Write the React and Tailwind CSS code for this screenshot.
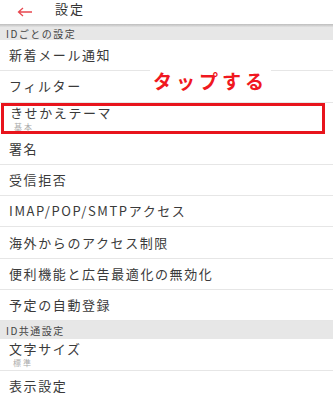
import React from "react";

const font = { fontFamily: '"Noto Sans CJK JP", "Noto Sans", sans-serif' };

function Row({ title, sub, className = "" }) {
  return (
    <div className={`h-[31.3px] border-b border-[#e6e6e6] bg-white pl-[9px] flex flex-col justify-center ${className}`}>
      <div className="text-[13px] leading-[14px] tracking-[1.6px] text-[#3a3a3a]">{title}</div>
      {sub && <div className="mt-[3px] pl-[4px] text-[8px] leading-[8px] tracking-[2px] text-[#aaa]">{sub}</div>}
    </div>
  );
}

function Section({ label, className = "" }) {
  return (
    <div className={`bg-[#e7e7e7] pl-[6px] flex items-center text-[10px] tracking-[1.5px] text-[#444] ${className}`}>
      {label}
    </div>
  );
}

export default function App() {
  return (
    <div className="w-[333px] h-[400px] overflow-hidden bg-white relative" style={font}>
      <div className="h-[24px] bg-white flex items-start">
        <svg className="ml-[17px] mt-[7px]" width="16" height="10" viewBox="0 0 16 10" fill="none">
          <path d="M15 5H2M6 1L1.5 5L6 9" stroke="#e8474f" strokeWidth="1.3" />
        </svg>
        <span className="ml-[22px] mt-[1px] text-[13px] leading-[15px] tracking-[2px] text-[#333]">設定</span>
      </div>
      <div className="h-[3px] bg-gradient-to-b from-[#bdbdbd] to-[#e2e2e2]" />
      <Section label="IDごとの設定" className="h-[13px]" />
      <Row title="新着メール通知" />
      <Row title="フィルター" />
      <div className="border-[3px] border-[#e8141c] mx-[1px] mr-[8px]">
        <Row title="きせかえテーマ" sub="基本" className="!h-[25px] !border-b-0 !pl-[6px] !justify-start pt-[0px]" />
      </div>
      <Row title="署名" />
      <Row title="受信拒否" />
      <Row title="IMAP/POP/SMTPアクセス" />
      <Row title="海外からのアクセス制限" />
      <Row title="便利機能と広告最適化の無効化" />
      <Row title="予定の自動登録" />
      <Section label="ID共通設定" className="h-[18px]" />
      <Row title="文字サイズ" sub="標準" />
      <Row title="表示設定" />
      <div className="absolute left-[150px] top-[69px] bg-white px-[3px] text-[19px] leading-[23px] font-bold text-[#f01820] tracking-[4px]">
        タップする
      </div>
    </div>
  );
}
